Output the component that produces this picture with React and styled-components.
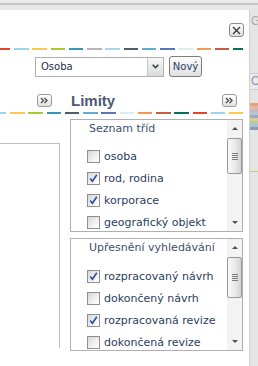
import React from 'react';
import styled, {createGlobalStyle} from 'styled-components';

const GlobalStyle = createGlobalStyle`
  html, body {
    margin: 0;
    padding: 0;
    background: #e5e5e5;
  }
  body {
    font-family: 'DejaVu Sans', Verdana, sans-serif;
  }
`;

const TEXT = '#2a3c62';

const TOP_COLORS = [
  '#e8432b', '#9fd2ee', '#fdc951', '#a8cb35', '#3596b7', '#b5b5b8', '#a9d6ec',
  '#4c5f6f', '#5eaed2', '#5875b9', '#dcecf3', '#f39a50', '#c75c47', '#05705a',
];

const MID_COLORS = [
  '#9fd2ee', '#fdc951', '#a8cb35', '#3596b7', '#4c5f6f', '#5eaed2', '#5875b9',
  '#dcecf3', '#f39a50', '#c75c47', '#05705a', '#e8432b', '#9fd2ee', '#fdc951',
];

const STRIPES = [
  '#e3a37e', '#e8b5a8', '#c9b7b8', '#b6c6d8', '#9babbd', '#d8c9a3', '#b7cb98', '#a9c2dc', '#8e9aa9',
];

const Page = styled.div`
  width: 258px;
  height: 366px;
  overflow: hidden;
  display: flex;
  flex-direction: column;
  background: #e5e5e5;
`;

const TopBar = styled.div`
  flex: none;
  height: 10px;
  background: linear-gradient(#ececec 0 3px, #c6c6c6 3px 5px, #e7e7e7 5px);
`;

const Main = styled.div`
  flex: 1;
  display: flex;
  min-height: 0;
`;

const Dialog = styled.div`
  flex: none;
  width: 249px;
  box-sizing: border-box;
  padding-right: 5px;
  background: #fff;
  display: flex;
  flex-direction: column;
`;

const CloseButton = styled.div`
  align-self: flex-end;
  margin-top: 13px;
  width: 15px;
  height: 14px;
  box-sizing: border-box;
  border: 1px solid #8a8a8a;
  border-radius: 3px;
  background: linear-gradient(#fdfdfd, #dedede);
  display: flex;
  align-items: center;
  justify-content: center;
`;

const DashRow = styled.div`
  flex: none;
  display: flex;
  width: 243px;
  height: 2px;
  overflow: hidden;
  margin-top: ${props => props.$top}px;

  & > span:first-child {
    margin-left: -${props => props.$offset}px;
  }
`;

const Dash = styled.span`
  flex: none;
  width: 14.5px;
  height: 2px;
  margin-right: 3.75px;
  background: ${props => props.$color};
`;

const Toolbar = styled.div`
  flex: none;
  display: flex;
  align-items: center;
  gap: 5px;
  height: 21px;
  margin-top: 6px;
  padding-left: 35px;
`;

const Select = styled.div`
  width: 129px;
  height: 20px;
  box-sizing: border-box;
  border: 1px solid #a9b0ba;
  background: #fff;
  display: flex;
  align-items: stretch;
`;

const SelectValue = styled.span`
  flex: 1;
  padding-left: 5px;
  font-size: 10px;
  line-height: 18px;
  color: #1f2f4d;
`;

const SelectArrow = styled.span`
  flex: none;
  width: 15px;
  border-left: 1px solid #c6c9cc;
  background: linear-gradient(#f8f8f8, #dadada);
  display: flex;
  align-items: center;
  justify-content: center;
`;

const Button = styled.div`
  width: 33px;
  height: 21px;
  box-sizing: border-box;
  border: 1px solid #7d7d7d;
  border-radius: 3px;
  background: linear-gradient(#fdfdfd, #e0e0e0);
  font-size: 10px;
  line-height: 19px;
  text-align: center;
  color: #2b3c6c;
`;

const HeaderRow = styled.div`
  flex: none;
  display: flex;
  align-items: center;
  width: 243px;
  height: 15px;
  margin-top: 16px;
`;

const LeftHead = styled.div`
  flex: none;
  width: 70px;
  box-sizing: border-box;
  padding-left: 37px;
  display: flex;
`;

const RightHead = styled.div`
  flex: 1;
  display: flex;
  align-items: center;
  justify-content: space-between;
  padding: 0 6px 0 1px;
`;

const Title = styled.span`
  font-family: 'Liberation Sans', Arial, sans-serif;
  font-weight: bold;
  font-size: 15px;
  line-height: 15px;
  color: #4b5a76;
`;

const ExpandButton = styled.div`
  width: 15px;
  height: 13px;
  box-sizing: border-box;
  border: 1px solid #9a9a9a;
  border-radius: 3px;
  background: linear-gradient(#ffffff, #e2e2e2);
  display: flex;
  align-items: center;
  justify-content: center;
`;

const Columns = styled.div`
  flex: 1;
  display: flex;
  width: 243px;
  min-height: 0;
`;

const LeftPanel = styled.div`
  flex: none;
  width: 59px;
  margin: 29px 0 18px;
  border-top: 1px solid #bdbdbd;
  border-right: 1px solid #bdbdbd;
`;

const RightColumn = styled.div`
  flex: none;
  width: 173px;
  margin-left: 10px;
  padding-top: 5px;
  display: flex;
  flex-direction: column;
  gap: 6px;
`;

const ListBox = styled.div`
  height: 113px;
  box-sizing: border-box;
  border: 1px solid #b0b0b0;
  display: flex;
`;

const ListContent = styled.div`
  flex: 1;
  overflow: hidden;
`;

const ListTitle = styled.div`
  padding: 2px 0 0 18px;
  font-size: 11px;
  line-height: 14px;
  color: #3e4f70;
  white-space: nowrap;
`;

const Items = styled.div`
  margin-top: ${props => props.$top}px;
  padding-left: 16px;
`;

const Item = styled.div`
  height: 22px;
  display: flex;
  align-items: center;
  gap: 4px;
  font-size: 11px;
  color: ${TEXT};
  white-space: nowrap;
`;

const CheckBox = styled.span`
  flex: none;
  width: 13px;
  height: 13px;
  box-sizing: border-box;
  border: 1px solid #8e8e8e;
  background: linear-gradient(135deg, #d6d6d6, #f4f4f4 65%, #ffffff);
  display: flex;
  align-items: center;
  justify-content: center;
`;

const ScrollBar = styled.div`
  flex: none;
  width: 15px;
  background: #f3f3f3;
  display: flex;
  flex-direction: column;
`;

const ArrowCell = styled.div`
  flex: none;
  height: 17px;
  display: flex;
  align-items: center;
  justify-content: center;
  margin-top: ${props => (props.$down ? 'auto' : '0')};
`;

const Arrow = styled.span`
  width: 0;
  height: 0;
  border-left: 3px solid transparent;
  border-right: 3px solid transparent;
  ${props =>
    props.$down
      ? 'border-top: 3px solid #505050;'
      : 'border-bottom: 3px solid #505050;'}
`;

const Thumb = styled.div`
  flex: none;
  margin-top: 1px;
  height: ${props => props.$height}px;
  box-sizing: border-box;
  border: 1px solid #999;
  border-radius: 2px;
  background: linear-gradient(90deg, #f9f9f9, #e9e9e9 55%, #d4d4d4);
  display: flex;
  flex-direction: column;
  align-items: center;
  justify-content: center;
  gap: 1px;
`;

const Grip = styled.span`
  width: 6px;
  height: 1px;
  background: #7c7c7c;
`;

const Strip = styled.div`
  flex: 1;
  overflow: hidden;
  display: flex;
  flex-direction: column;
  border-left: 1px solid #d2d2d2;
`;

const StripText = styled.div`
  font-family: 'Liberation Sans', Arial, sans-serif;
  font-size: 12px;
  line-height: 14px;
  color: #ababab;
  padding-left: 1px;
  margin-top: ${props => props.$top}px;
  white-space: nowrap;
`;

const StripField = styled.div`
  margin-top: 45px;
  height: 15px;
  border-top: 1px solid #cfcfcf;
  border-bottom: 1px solid #cfcfcf;
  background: #eaeaea;
  font-family: 'Liberation Sans', Arial, sans-serif;
  font-size: 12px;
  line-height: 15px;
  color: #8898aa;
  padding-left: 1px;
`;

const Stripe = styled.div`
  flex: none;
  height: 3px;
  background: ${props => props.$color};
`;

const StripeBlock = styled.div`
  margin-top: 13px;
  display: flex;
  flex-direction: column;
`;

const AccentLine = styled.div`
  margin-top: 41px;
  height: 1px;
  background: #c3d27a;
`;

const DashLine = ({colors, top, offset}) => (
  <DashRow $top={top} $offset={offset}>
    {colors.map((color, index) => (
      <Dash key={index} $color={color} />
    ))}
  </DashRow>
);

const Expand = () => (
  <ExpandButton>
    <svg width="9" height="7" viewBox="0 0 9 7">
      <path d="M1 1 L3.5 3.5 L1 6 M4.5 1 L7 3.5 L4.5 6" fill="none" stroke="#474747" strokeWidth="1.3" />
    </svg>
  </ExpandButton>
);

const Check = ({checked}) => (
  <CheckBox>
    {checked && (
      <svg width="11" height="11" viewBox="0 0 11 11">
        <path d="M2.2 5.6 L4.4 8.3 L8.8 1.8" fill="none" stroke="#2f4e9e" strokeWidth="1.6" />
      </svg>
    )}
  </CheckBox>
);

const List = ({title, items, listTop, thumb}) => (
  <ListBox>
    <ListContent>
      <ListTitle>{title}</ListTitle>
      <Items $top={listTop}>
        {items.map(item => (
          <Item key={item.label}>
            <Check checked={item.checked} />
            {item.label}
          </Item>
        ))}
      </Items>
    </ListContent>
    <ScrollBar>
      <ArrowCell>
        <Arrow />
      </ArrowCell>
      <Thumb $height={thumb}>
        <Grip />
        <Grip />
        <Grip />
        <Grip />
      </Thumb>
      <ArrowCell $down>
        <Arrow $down />
      </ArrowCell>
    </ScrollBar>
  </ListBox>
);

const classes = [
  {label: 'osoba', checked: false},
  {label: 'rod, rodina', checked: true},
  {label: 'korporace', checked: true},
  {label: 'geografický objekt', checked: false},
];

const states = [
  {label: 'rozpracovaný návrh', checked: true},
  {label: 'dokončený návrh', checked: false},
  {label: 'rozpracovaná revize', checked: true},
  {label: 'dokončená revize', checked: false},
];

export default function App() {
  return (
    <>
      <GlobalStyle />
      <Page>
        <TopBar />
        <Main>
          <Dialog>
            <CloseButton>
              <svg width="9" height="9" viewBox="0 0 9 9">
                <path d="M1 1 L8 8 M8 1 L1 8" stroke="#333" strokeWidth="1.2" />
              </svg>
            </CloseButton>
            <DashLine colors={TOP_COLORS} top={11} offset={4.25} />
            <Toolbar>
              <Select>
                <SelectValue>Osoba</SelectValue>
                <SelectArrow>
                  <svg width="7" height="5" viewBox="0 0 7 5">
                    <path d="M0.7 0.8 L3.5 3.7 L6.3 0.8" fill="none" stroke="#333" strokeWidth="1.5" />
                  </svg>
                </SelectArrow>
              </Select>
              <Button>Nový</Button>
            </Toolbar>
            <HeaderRow>
              <LeftHead>
                <Expand />
              </LeftHead>
              <RightHead>
                <Title>Limity</Title>
                <Expand />
              </RightHead>
            </HeaderRow>
            <DashLine colors={MID_COLORS} top={4} offset={8.25} />
            <Columns>
              <LeftPanel />
              <RightColumn>
                <List title="Seznam tříd" items={classes} listTop={9} thumb={36} />
                <List title="Upřesnění vyhledávání" items={states} listTop={10} thumb={41} />
              </RightColumn>
            </Columns>
          </Dialog>
          <Strip>
            <StripText $top={4}>GR</StripText>
            <StripField>O</StripField>
            <StripeBlock>
              {STRIPES.map((color, index) => (
                <Stripe key={index} $color={color} />
              ))}
            </StripeBlock>
            <AccentLine />
          </Strip>
        </Main>
      </Page>
    </>
  );
}
